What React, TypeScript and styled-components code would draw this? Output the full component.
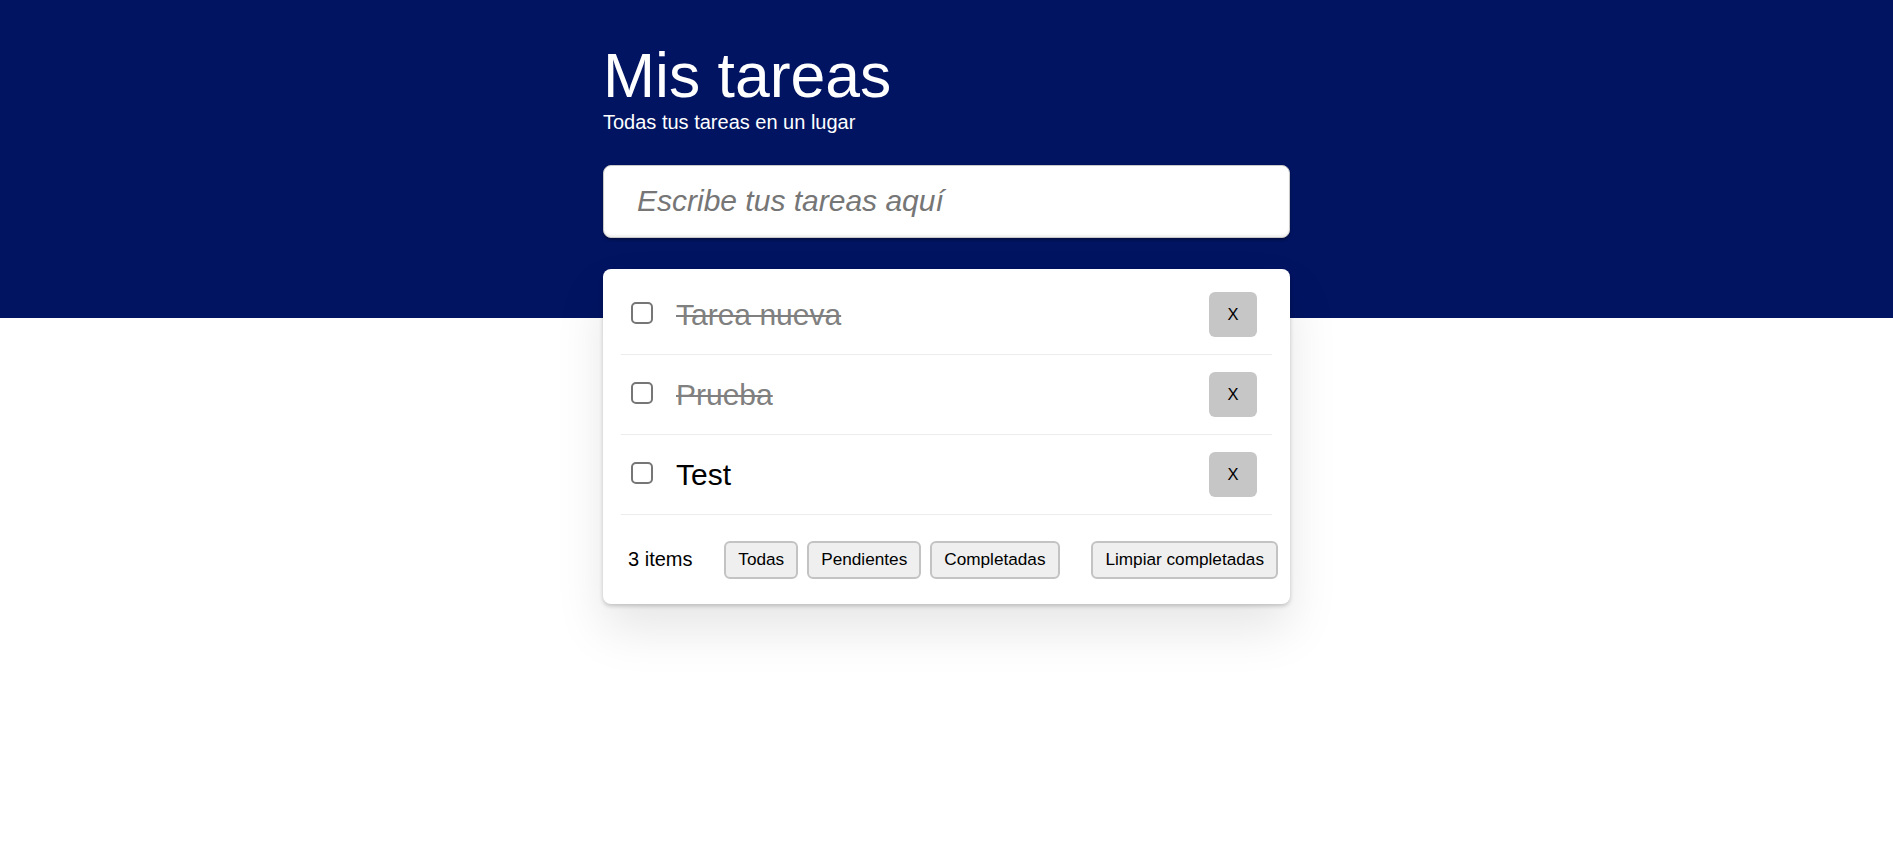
import React, { useState } from "react";
import styled, { createGlobalStyle } from "styled-components";

const GlobalStyle = createGlobalStyle`
  html, body { margin: 0; padding: 0; background: #ffffff; }
  body { font-family: "Liberation Sans", Arial, sans-serif; }
  * { box-sizing: border-box; }
`;

const Page = styled.div`
  min-height: 841px;
  background: linear-gradient(#001462 0, #001462 318px, #ffffff 318px);
  padding-top: 44px;
`;

const Container = styled.div`
  width: 687px;
  margin: 0 auto;
`;

const Title = styled.h1`
  margin: 0;
  font-size: 62.5px;
  line-height: 1;
  font-weight: 400;
  color: #ffffff;
`;

const Subtitle = styled.p`
  margin: 5px 0 0;
  font-size: 20px;
  line-height: 1;
  color: #ffffff;
`;

const NewTodo = styled.input`
  display: block;
  width: 100%;
  height: 73px;
  margin-top: 33px;
  padding: 0 0 0 33px;
  border: 1px solid #c8c8c8;
  border-radius: 8px;
  background: #ffffff;
  font-family: "Liberation Sans", Arial, sans-serif;
  font-size: 30px;
  color: #222;
  outline: none;
  box-shadow: inset 0 -2px 2px rgba(0, 0, 0, 0.06), 0 2px 3px rgba(0, 0, 0, 0.35);
  &::placeholder {
    font-style: italic;
    color: #767676;
  }
`;

const Card = styled.section`
  margin-top: 31px;
  background: #ffffff;
  border-radius: 8px;
  padding-top: 6px;
  box-shadow: 0 2px 4px 0 rgba(0, 0, 0, 0.2), 0 25px 50px 0 rgba(0, 0, 0, 0.1);
`;

const List = styled.ul`
  list-style: none;
  margin: 0 18px;
  padding: 0;
`;

const Row = styled.li`
  display: flex;
  align-items: center;
  height: 80px;
  padding: 0 15px 0 10px;
  border-bottom: 1px solid #ececec;
`;

const Check = styled.input.attrs({ type: "checkbox" })`
  appearance: none;
  -webkit-appearance: none;
  width: 22px;
  height: 22px;
  margin: 0 23px 2px 0;
  border: 2px solid #767676;
  border-radius: 5px;
  background: #ffffff;
  flex: none;
`;

const Label = styled.span<{ $done: boolean }>`
  flex: 1;
  font-size: 30px;
  padding-top: 2px;
  color: ${(p) => (p.$done ? "#808080" : "#000000")};
  text-decoration: ${(p) => (p.$done ? "line-through" : "none")};
  text-decoration-thickness: 2px;
`;

const Remove = styled.button`
  width: 48px;
  height: 45px;
  border: none;
  border-radius: 6px;
  background: #c6c6c6;
  color: #000000;
  font-family: "Liberation Sans", Arial, sans-serif;
  font-size: 16.5px;
  padding: 0;
  cursor: pointer;
`;

const Footer = styled.footer`
  display: flex;
  align-items: center;
  justify-content: space-between;
  padding: 26px 12px 25px 25px;
`;

const Count = styled.span`
  font-size: 20px;
  color: #000000;
`;

const Filters = styled.div`
  display: flex;
  gap: 9px;
`;

const FooterButton = styled.button`
  height: 38px;
  padding: 0 12px;
  border: 2px solid #c3c3c3;
  border-radius: 6px;
  background: #efefef;
  color: #000000;
  font-family: "Liberation Sans", Arial, sans-serif;
  font-size: 17.2px;
  cursor: pointer;
`;

const todos = [
  { id: 1, text: "Tarea nueva", done: true },
  { id: 2, text: "Prueba", done: true },
  { id: 3, text: "Test", done: false },
];

export default function App() {
  const [items] = useState(todos);
  return (
    <>
      <GlobalStyle />
      <Page>
        <Container>
          <Title>Mis tareas</Title>
          <Subtitle>Todas tus tareas en un lugar</Subtitle>
          <NewTodo placeholder="Escribe tus tareas aquí" />
          <Card>
            <List>
              {items.map((t) => (
                <Row key={t.id}>
                  <Check />
                  <Label $done={t.done}>{t.text}</Label>
                  <Remove>X</Remove>
                </Row>
              ))}
            </List>
            <Footer>
              <Count>{items.length} items</Count>
              <Filters>
                <FooterButton>Todas</FooterButton>
                <FooterButton>Pendientes</FooterButton>
                <FooterButton>Completadas</FooterButton>
              </Filters>
              <FooterButton>Limpiar completadas</FooterButton>
            </Footer>
          </Card>
        </Container>
      </Page>
    </>
  );
}
